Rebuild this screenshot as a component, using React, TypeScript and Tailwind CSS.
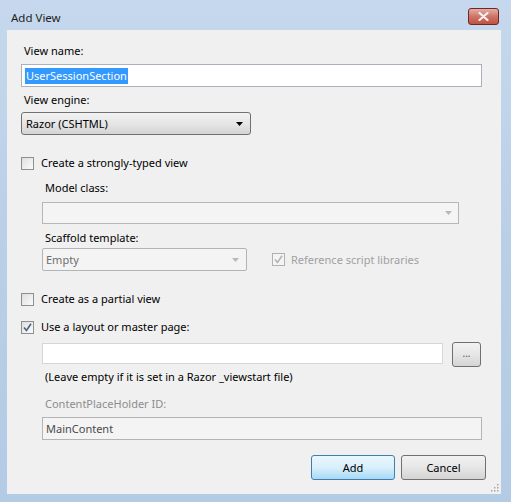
import React from 'react';

const font = { fontFamily: '"Noto Sans", "Open Sans", sans-serif' };

const Check = ({ checked = false, disabled = false }: { checked?: boolean; disabled?: boolean }) => (
  <span
    className={`flex h-[13px] w-[13px] shrink-0 items-center justify-center border ${
      disabled ? 'border-[#b1b1b1] bg-[#f4f4f4]' : 'border-[#8e8f8f] bg-gradient-to-br from-[#dcdcdc] to-[#fbfbfb]'
    }`}
  >
    <span className={`flex h-[9px] w-[9px] items-center justify-center ${disabled ? '' : 'bg-gradient-to-br from-[#e2e2e2] to-[#f8f8f8]'}`}>
      {checked && (
        <svg width="9" height="9" viewBox="0 0 9 9">
          <path
            d="M1 4.5 L3.5 7.5 L8 0.8"
            fill="none"
            stroke={disabled ? '#b4b4b4' : '#4d6185'}
            strokeWidth="1.6"
          />
        </svg>
      )}
    </span>
  </span>
);

const Arrow = ({ color }: { color: string }) => (
  <svg width="7" height="4" viewBox="0 0 7 4">
    <path d="M0 0 H7 L3.5 4 Z" fill={color} />
  </svg>
);

export default function App() {
  return (
    <div
      className="flex h-[502px] w-[511px] flex-col bg-gradient-to-b from-[#c5d8ed] via-[#b9cfe7] to-[#b3cbe5] pb-[8px] pl-[7px] pr-[10px] text-[11px] text-black"
      style={font}
    >
      {/* title bar */}
      <div className="flex h-[30px] shrink-0 items-start justify-between">
        <span className="mt-[9px] pl-[4px] text-[11.5px] text-[#1e1e1e]">Add View</span>
        <button className="mr-[2px] mt-[8px] flex h-[17px] w-[31px] items-center justify-center rounded-[3px] border border-[#6b2a23] bg-gradient-to-b from-[#e6ada4] via-[#cf7468] to-[#c1513f]">
          <svg width="11" height="9" viewBox="0 0 11 9">
            <path d="M1.5 1 L9.5 8 M9.5 1 L1.5 8" stroke="#f4f4f4" strokeWidth="2.2" strokeLinecap="round" />
          </svg>
        </button>
      </div>

      {/* client area */}
      <div className="relative flex flex-1 flex-col bg-[#f0f0f0] pl-[14px] pr-[15px] pt-[13px] leading-[16px]">
        <div className="pl-[3px]">View name:</div>
        <div className="mr-[4px] mt-[5px] flex h-[23px] items-center border border-[#abb0ba] bg-white pl-[3px]">
          <span className="bg-[#3399ff] px-[1px] text-white">UserSessionSection</span>
        </div>

        <div className="mt-[5px] pl-[3px]">View engine:</div>
        <div className="mt-[4px] flex h-[23px] w-[230px] items-center justify-between rounded-[3px] border border-[#707070] bg-gradient-to-b from-[#f2f2f2] via-[#e6e6e6] to-[#d4d4d4] pl-[4px] pr-[7px]">
          <span>Razor (CSHTML)</span>
          <Arrow color="#000000" />
        </div>

        <label className="mt-[20px] flex items-center gap-[7px]">
          <Check />
          <span>Create a strongly-typed view</span>
        </label>

        <div className="ml-[21px] flex flex-col">
          <div className="mt-[9px] pl-[3px]">Model class:</div>
          <div className="mr-[27px] mt-[6px] flex h-[22px] items-center justify-end border border-[#b7b7b7] bg-[#f4f4f4] pr-[6px]">
            <Arrow color="#b8b8b8" />
          </div>

          <div className="mt-[6px] pl-[3px]">Scaffold template:</div>
          <div className="mt-[2px] flex items-center">
            <div className="flex h-[23px] w-[205px] items-center justify-between rounded-[2px] border border-[#b4b4b4] bg-[#f4f4f4] pl-[3px] pr-[7px] text-[#6d6d6d]">
              <span>Empty</span>
              <Arrow color="#b8b8b8" />
            </div>
            <div className="ml-[25px] flex items-center gap-[6px] text-[#a0a0a0]">
              <Check checked disabled />
              <span>Reference script libraries</span>
            </div>
          </div>
        </div>

        <label className="mt-[20px] flex items-center gap-[7px]">
          <Check />
          <span>Create as a partial view</span>
        </label>
        <label className="mt-[12px] flex items-center gap-[7px]">
          <Check checked />
          <span>Use a layout or master page:</span>
        </label>

        <div className="ml-[21px] flex flex-col">
          <div className="mt-[7px] flex items-start">
            <div className="mt-[1px] h-[21px] w-[401px] border border-[#d3d6dc] bg-white" />
            <button className="ml-[9px] flex h-[25px] w-[29px] items-center justify-center rounded-[3px] border border-[#707070] bg-gradient-to-b from-[#f2f2f2] via-[#e6e6e6] to-[#d4d4d4] pb-[3px] text-[10px] text-[#555555]">
              ...
            </button>
          </div>
          <div className="mt-[2px] pl-[3px]">(Leave empty if it is set in a Razor _viewstart file)</div>

          <div className="mt-[11px] pl-[3px] text-[#8d8d8d]">ContentPlaceHolder ID:</div>
          <div className="mr-[4px] mt-[5px] flex h-[23px] items-center border border-[#b4b4b4] bg-[#f4f4f4] pl-[3px] text-[#4a4a4a]">
            MainContent
          </div>
        </div>

        <div className="mt-[15px] flex justify-end gap-[6px]">
          <button className="flex h-[25px] w-[84px] items-center justify-center rounded-[3px] border border-[#3c7fb1] bg-gradient-to-b from-[#eaf6fd] via-[#d9f0fc] to-[#a7d9f5]">
            Add
          </button>
          <button className="flex h-[25px] w-[85px] items-center justify-center rounded-[3px] border border-[#707070] bg-gradient-to-b from-[#f2f2f2] via-[#e6e6e6] to-[#d4d4d4]">
            Cancel
          </button>
        </div>

        {/* size grip */}
        <svg className="absolute bottom-[2px] right-[2px]" width="10" height="10" viewBox="0 0 10 10">
          {[
            [8, 2],
            [8, 5],
            [5, 5],
            [8, 8],
            [5, 8],
            [2, 8],
          ].map(([x, y]) => (
            <rect key={`${x}-${y}`} x={x} y={y} width="1.5" height="1.5" fill="#a8a8a8" />
          ))}
        </svg>
      </div>
    </div>
  );
}
